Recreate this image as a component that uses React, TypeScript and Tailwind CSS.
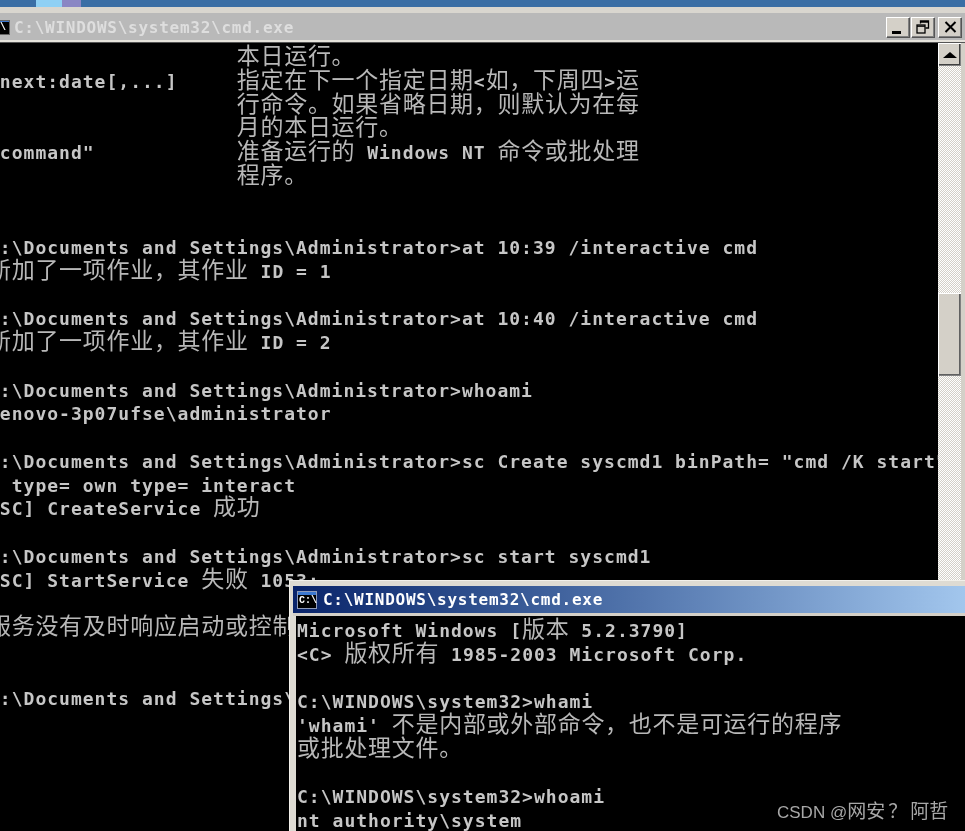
const pad = ' '.repeat(21)

const mainLines = [
  pad + '本日运行。',
  '/next:date[,...]     指定在下一个指定日期<如，下周四>运',
  pad + '行命令。如果省略日期，则默认为在每',
  pad + '月的本日运行。',
  '"command"            准备运行的 Windows NT 命令或批处理',
  pad + '程序。',
  '',
  '',
  'C:\\Documents and Settings\\Administrator>at 10:39 /interactive cmd',
  '新加了一项作业，其作业 ID = 1',
  '',
  'C:\\Documents and Settings\\Administrator>at 10:40 /interactive cmd',
  '新加了一项作业，其作业 ID = 2',
  '',
  'C:\\Documents and Settings\\Administrator>whoami',
  'lenovo-3p07ufse\\administrator',
  '',
  'C:\\Documents and Settings\\Administrator>sc Create syscmd1 binPath= "cmd /K start"',
  '  type= own type= interact',
  '[SC] CreateService 成功',
  '',
  'C:\\Documents and Settings\\Administrator>sc start syscmd1',
  '[SC] StartService 失败 1053:',
  '',
  '服务没有及时响应启动或控制请求。',
  '',
  '',
  'C:\\Documents and Settings\\Administrator>',
  '',
  '',
]

const popupLines = [
  'Microsoft Windows [版本 5.2.3790]',
  '<C> 版权所有 1985-2003 Microsoft Corp.',
  '',
  'C:\\WINDOWS\\system32>whami',
  "'whami' 不是内部或外部命令，也不是可运行的程序",
  '或批处理文件。',
  '',
  'C:\\WINDOWS\\system32>whoami',
  'nt authority\\system',
]

function ConsoleLine({ text }: { text: string }) {
  const parts = text.split(/([\u3000-\u9fff\uff00-\uffef]+)/)
  return (
    <div className="h-[23.75px] whitespace-pre leading-[23.75px]">
      {parts.map((part, i) =>
        i % 2 === 1 ? (
          <span key={i} className="font-['Noto_Sans_CJK_SC',sans-serif] text-[23px] leading-[16px] font-normal tracking-[0.7px] text-[#b8b8b8]">
            {part}
          </span>
        ) : (
          <span key={i}>{part}</span>
        ),
      )}
    </div>
  )
}

function CmdIcon({ small }: { small?: boolean }) {
  return (
    <div className={small ? 'flex h-[18px] w-[20px] shrink-0 flex-col border border-[#8f9bb8] bg-black' : 'flex h-[15px] w-[24px] shrink-0 flex-col border border-[#666] bg-black'}>
      <div className="h-[3px] bg-[#3c78d0]" />
      <div className="flex-1 pl-[1px] font-['Liberation_Mono',monospace] text-[10px] leading-[12px] font-bold tracking-normal text-white">C:\</div>
    </div>
  )
}

function WinButton({ children }: { children: React.ReactNode }) {
  return (
    <div className="flex h-[20px] w-[23px] items-center justify-center border-t border-l border-t-white border-l-white bg-[#d4d0c8] shadow-[1px_1px_0_#555555,inset_-1px_-1px_0_#808080]">
      {children}
    </div>
  )
}

export default function App() {
  return (
    <div className="relative flex h-[831px] w-[965px] flex-col overflow-hidden bg-black font-['DejaVu_Sans_Mono',monospace] text-[18px] font-bold tracking-[1.01px] text-[#c6c6c6] blur-[0.4px]">
      {/* desktop strip behind the window */}
      <div className="relative h-[7px] shrink-0 bg-[#3a6ea5]">
        <div className="absolute top-0 left-[36px] h-[7px] w-[26px] bg-[#8fd0f4]" />
        <div className="absolute top-0 left-[62px] h-[7px] w-[19px] bg-[#8a86c4]" />
      </div>
      <div className="h-[6px] shrink-0 bg-[#d9d6cf]" />

      {/* title bar */}
      <div className="flex h-[27px] shrink-0 items-center justify-between bg-[#b9b9b9] pr-[4px]">
        <div className="flex items-center gap-[4px] pt-[2px]">
          <div className="-ml-[14px]">
            <CmdIcon />
          </div>
          <span className="text-[16px] tracking-[0.74px] text-[#dedede]">C:\WINDOWS\system32\cmd.exe</span>
        </div>
        <div className="flex items-center gap-[2px] tracking-normal">
          <WinButton>
            <div className="mt-[10px] -ml-[3px] h-[3px] w-[9px] bg-black" />
          </WinButton>
          <WinButton>
            <svg width="14" height="14" viewBox="0 0 14 14" fill="none" stroke="#000" strokeWidth="1.3">
              <path d="M4.5 3.5V1h8v7h-3M4.5 2.2h8" />
              <rect x="1" y="5" width="8" height="8" />
              <path d="M1 6.2h8" />
            </svg>
          </WinButton>
          <div className="ml-[2px]">
            <WinButton>
              <svg width="13" height="12" viewBox="0 0 13 12" stroke="#000" strokeWidth="2">
                <path d="M1.5 1l10 10M11.5 1l-10 10" />
              </svg>
            </WinButton>
          </div>
        </div>
      </div>
      <div className="h-[2px] shrink-0 bg-[#e6e3dc]" />
      <div className="h-[1px] shrink-0 bg-[#555]" />

      {/* main console */}
      <div className="flex min-h-0 flex-1">
        <div className="min-w-0 flex-1 overflow-hidden pt-[3px]">
          <div className="-ml-[12px]">
            {mainLines.map((line, i) => (
              <ConsoleLine key={i} text={line} />
            ))}
          </div>
        </div>
        <div className="flex w-[23px] shrink-0 flex-col bg-[repeating-conic-gradient(#ffffff_0_25%,#d4d0c8_0_50%)] bg-[length:2px_2px]">
          <div className="flex h-[23px] shrink-0 items-center justify-center border-t border-l border-t-white border-l-white bg-[#d4d0c8] shadow-[inset_-1px_-1px_0_#808080,inset_-2px_-2px_0_#404040]">
            <div className="h-0 w-0 border-x-[7px] border-b-[6px] border-x-transparent border-b-black" />
          </div>
          <div className="mt-[227px] h-[83px] shrink-0 border-t border-l border-t-white border-l-white bg-[#d4d0c8] shadow-[inset_-1px_-1px_0_#808080,inset_-2px_-2px_0_#606060]" />
        </div>
        <div className="w-[4px] shrink-0 bg-[#d4d0c8]" />
      </div>

      {/* second console window on top */}
      <div className="absolute top-[580px] left-[289px] flex h-[260px] w-[690px] flex-col border-t border-l border-t-[#f2f0ea] border-l-[#f2f0ea] bg-[#dedbd3] pt-[5px] pl-[3px]">
        <div className="flex h-[27px] shrink-0 items-center gap-[6px] bg-gradient-to-r from-[#0a246a] to-[#a6caf0] pl-[4px]">
          <CmdIcon small />
          <span className="pt-[1px] text-[16px] tracking-[0.74px] text-white">C:\WINDOWS\system32\cmd.exe</span>
        </div>
        <div className="h-[3px] shrink-0 bg-[#d4d0c8]" />
        <div className="ml-[3px] flex-1 overflow-hidden bg-black pt-[3px] pl-[1px]">
          {popupLines.map((line, i) => (
            <ConsoleLine key={i} text={line} />
          ))}
        </div>
      </div>

      {/* watermark */}
      <div className="absolute top-[798px] left-[777px] font-['Liberation_Sans','Noto_Sans_CJK_SC',sans-serif] text-[17px] font-normal tracking-normal text-[#a8a8a8]">
        CSDN @
        <span className="text-[19px]">
          网安<span className="pr-[3px] pl-[3px]">？</span>阿哲
        </span>
      </div>
    </div>
  )
}
